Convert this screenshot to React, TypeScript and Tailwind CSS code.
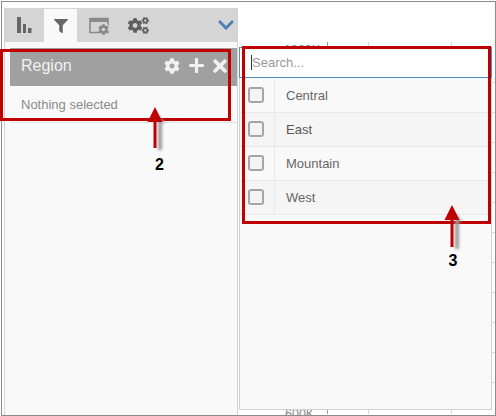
import { FaCog, FaCogs, FaFilter, FaPlus, FaTimes, FaChevronDown } from 'react-icons/fa';

const regions = ['Central', 'East', 'Mountain', 'West'];

const ChartBack = () => (
  <div className="absolute inset-0">
    <div className="absolute left-[327px] top-[42px] w-px h-[372px] bg-[#999999]" />
    <div className="absolute left-[368px] top-[42px] w-px h-[372px] bg-[#d8d8d8]" />
    <div className="absolute left-[451px] top-[42px] w-px h-[372px] bg-[#d8d8d8]" />
    {[82, 112, 142, 172, 202, 232, 262, 292, 322, 352, 382].map(y => (
      <div key={y} className="absolute left-[492px] w-[3px] h-px bg-[#d8d8d8]" style={{ top: y }} />
    ))}
    <div className="absolute left-[284px] top-[41px] text-[12.500px] text-[#888888]">1800K</div>
    <div className="absolute left-[285px] top-[405px] text-[12.500px] text-[#888888]">600K</div>
  </div>
);

const WindowGear = () => (
  <svg width="20" height="17" viewBox="0 0 20 17">
    <path d="M1 1.500h18v14H1z" fill="none" stroke="#8a8a8a" strokeWidth="1.600" />
    <path d="M1 1h18v4H1z" fill="#8a8a8a" />
    <circle cx="15" cy="11.500" r="5.400" fill="#d5d5d5" />
  </svg>
);

const Annotation = ({ x, tip, end, label, labelX, labelY }: { x: number; tip: number; end: number; label: string; labelX: number; labelY: number }) => (
  <>
    <svg className="absolute left-0 top-0 w-[496px] h-[416px] pointer-events-none" viewBox="0 0 496 416">
      <path className="blur-[1.500px]" d={`M${x + 3} ${tip + 8}l7 8h-3v${end - tip - 14}h-4z`} fill="#9a9a9a" />
      <path d={`M${x - 1.500} ${tip + 12}h3v${end - tip - 12}h-3z`} fill="#c00000" />
      <path d={`M${x} ${tip}l7.500 15h-15z`} fill="#c00000" />
    </svg>
    <div className="absolute w-5 text-center text-[16px] font-bold text-black leading-4" style={{ left: labelX - 10, top: labelY - 8 }}>{label}</div>
  </>
);

export default function App() {
  return (
    <div className="relative w-[496px] h-[416px] overflow-hidden bg-white" style={{ fontFamily: '"Liberation Sans", Arial, sans-serif' }}>
      <ChartBack />

      <div className="relative flex flex-col w-[234px] h-full ml-[4px] pt-[8px]">
        {/* toolbar */}
        <div className="flex items-center h-[34px] bg-[#d5d5d5] pr-[3px]">
          <div className="w-[40px] flex justify-center">
            <svg width="16" height="16" viewBox="0 0 16 16" fill="#666666">
              <path d="M1 0h4v16H1zM7 7h3v9H7zM12 11h3.500v5H12z" />
            </svg>
          </div>
          <div className="w-[33px] h-[33px] mt-px bg-[#f9f9f9] flex items-center justify-center">
            <FaFilter className="text-[#666666] text-[14px]" />
          </div>
          <div className="w-[42px] relative flex justify-center pl-[1px]">
            <WindowGear />
            <FaCog className="absolute left-[21px] top-[7px] text-[#888888] text-[11px]" />
          </div>
          <div className="w-[39px] flex justify-center">
            <FaCogs className="text-[#5f5f5f] text-[21px]" />
          </div>
          <FaChevronDown className="ml-auto text-[#4a7fb5] text-[18px]" />
        </div>

        {/* filter panel */}
        <div className="flex-1 bg-[#f9f9f9] border-x border-[#d4d4d4] pt-[6px] pl-[5px]">
          <div className="border-b border-[#e2e2e2] h-[75px]">
            <div className="flex items-center h-[38px] bg-[#a0a0a0] pl-[11px] pr-[7px] pb-[3px]">
              <span className="text-[16px] text-[#f2f2f2]">Region</span>
              <FaCog className="ml-auto text-[#f0f0f0] text-[16px]" />
              <FaPlus className="ml-[8px] text-[#f0f0f0] text-[17px]" />
              <FaTimes className="ml-[5px] text-[#f0f0f0] text-[20px]" />
            </div>
            <div className="pl-[11px] pt-[9px] text-[13px] text-[#8a8a8a]">Nothing selected</div>
          </div>
        </div>
      </div>

      {/* dropdown over the chart */}
      <div className="absolute left-[239px] top-[47px] w-[253px] h-[363px] bg-[#f9f9f9] border border-[#d2d2d2]">
        <div className="flex items-center h-[31px] -mt-px -mx-px mb-px bg-white border border-[#4b8fc7] pl-[11px] text-[13px] text-[#999999]">
          <span className="w-px h-[15px] bg-[#333333]" />
          Search...
        </div>
        {regions.map((r, i) => (
          <div key={r} className={`flex h-[34px] border-b border-[#e8e8e8] ${i % 2 ? 'bg-[#f5f5f5]' : 'bg-[#f9f9f9]'}`}>
            <div className="w-[35px] flex items-center justify-center border-r border-[#e8e8e8] pr-[2px] pb-[2px]">
              <span className="w-[16px] h-[16px] rounded-[3px] border-2 border-[#a6a6a6] bg-[#f4f4f4]" />
            </div>
            <div className={`flex items-center pl-[11px] text-[13px] ${i === 1 ? 'text-[#555555]' : 'text-[#666666]'}`}>{r}</div>
          </div>
        ))}
      </div>

      {/* screenshot frame and annotations */}
      <div className="absolute left-[1px] top-[1px] w-[495px] h-[415px] border border-[#8c8c8c]" />
      <div className="absolute left-0 top-[49px] w-[231px] h-[72px] border-[3px] border-[#c00000]" />
      <div className="absolute left-[242px] top-[46px] w-[249px] h-[178px] border-[3px] border-[#c00000]" />
      <Annotation x={155} tip={107} end={148} label="2" labelX={159.500} labelY={165} />
      <Annotation x={452} tip={205} end={247} label="3" labelX={453} labelY={261} />
    </div>
  );
}
